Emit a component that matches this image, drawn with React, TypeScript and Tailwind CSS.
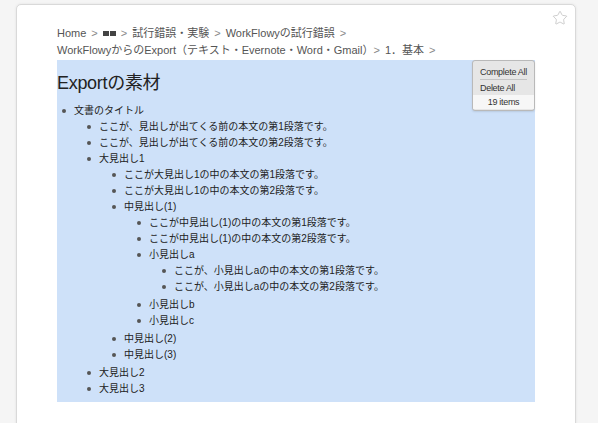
import { Star } from "lucide-react";

type N = { t: string; c?: N[] };

const tree: N[] = [
  {
    t: "文書のタイトル",
    c: [
      { t: "ここが、見出しが出てくる前の本文の第1段落です。" },
      { t: "ここが、見出しが出てくる前の本文の第2段落です。" },
      {
        t: "大見出し1",
        c: [
          { t: "ここが大見出し1の中の本文の第1段落です。" },
          { t: "ここが大見出し1の中の本文の第2段落です。" },
          {
            t: "中見出し(1)",
            c: [
              { t: "ここが中見出し(1)の中の本文の第1段落です。" },
              { t: "ここが中見出し(1)の中の本文の第2段落です。" },
              {
                t: "小見出しa",
                c: [
                  { t: "ここが、小見出しaの中の本文の第1段落です。" },
                  { t: "ここが、小見出しaの中の本文の第2段落です。" },
                ],
              },
              { t: "小見出しb" },
              { t: "小見出しc" },
            ],
          },
          { t: "中見出し(2)" },
          { t: "中見出し(3)" },
        ],
      },
      { t: "大見出し2" },
      { t: "大見出し3" },
    ],
  },
];

function List({ items, root }: { items: N[]; root?: boolean }) {
  return (
    <ul className={root ? "" : "ml-[25px] mb-[2px]"}>
      {items.map((n, i) => (
        <li key={i}>
          <div className="flex items-center h-[16px]">
            <span className="w-[4px] h-[4px] rounded-full bg-[#555] ml-[5px] mr-[8px] shrink-0" />
            <span className="whitespace-nowrap">{n.t}</span>
          </div>
          {n.c && <List items={n.c} />}
        </li>
      ))}
    </ul>
  );
}

const Sep = () => <span className="text-[#888] mx-[5px]">&gt;</span>;

export default function App() {
  return (
    <div
      className="w-[598px] h-[423px] overflow-hidden bg-[#f5f5f5] pt-[4px] pl-[16px]"
      style={{ fontFamily: '"Liberation Sans", "Noto Sans CJK JP", sans-serif' }}
    >
      <div className="relative w-[560px] h-[440px] bg-white border border-[#d9d9d9] rounded-[5px] shadow-[0_0_3px_rgba(0,0,0,0.08)] px-[40px] pt-[20px]">
        <Star
          className="absolute right-[7px] top-[5px] text-[#b5b5b5]"
          size={16}
          strokeWidth={1}
        />
        <div className="text-[11px] leading-[17px] text-[#555]">
          <div className="whitespace-nowrap flex items-center">
            Home<Sep />
            <span className="inline-flex gap-[1px]">
              <span className="w-[6px] h-[5px] bg-[#444]" />
              <span className="w-[6px] h-[5px] bg-[#444]" />
            </span>
            <Sep />試行錯誤・実験<Sep />WorkFlowyの試行錯誤<Sep />
          </div>
          <div className="whitespace-nowrap">
            WorkFlowyからのExport（テキスト・Evernote・Word・Gmail）
            <span className="text-[#888] mr-[5px]">&gt;</span>1．基本<Sep />
          </div>
        </div>
        <div className="relative bg-[#cee1f9] mt-[1px] pt-[11px] pb-[3px] text-[#222]">
          <div className="text-[18px] leading-[24px] text-[#222] tracking-[-0.3px]">
            Exportの素材
          </div>
          <div className="mt-[8px] text-[10px] leading-[16px]">
            <List items={tree} root />
          </div>
          <div className="absolute right-0 top-0 w-[63px] h-[51px] border border-[#b9b9b9] rounded-[3px] bg-[#e6e6e6] text-[9px] text-[#333] tracking-[-0.3px] overflow-hidden shadow-[0_1px_2px_rgba(0,0,0,0.1)]">
            <div className="px-[7px] pt-[3px]">
              <div className="h-[16px] leading-[16px] border-b border-[#c4c4c4]">Complete All</div>
              <div className="h-[16px] leading-[16px]">Delete All</div>
            </div>
            <div className="bg-[#f7f7f7] h-[14px] leading-[14px] text-center mt-[-1px]">19 items</div>
          </div>
        </div>
      </div>
    </div>
  );
}
